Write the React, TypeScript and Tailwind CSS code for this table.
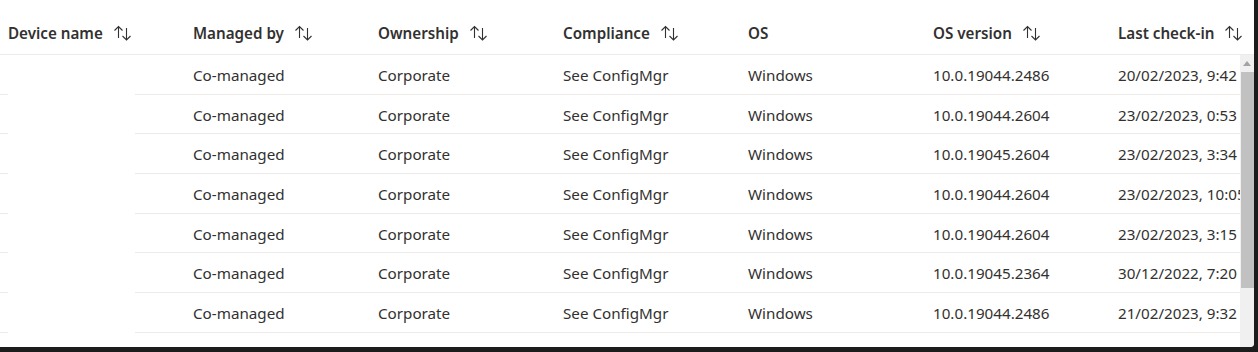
import React from 'react'

const cols = ['Device name', 'Managed by', 'Ownership', 'Compliance', 'OS', 'OS version', 'Last check-in']
const sortable = [true, true, true, true, false, true, true]

const rows = [
  { ver: '10.0.19044.2486', last: '20/02/2023, 9:42 AM' },
  { ver: '10.0.19044.2604', last: '23/02/2023, 0:53 AM' },
  { ver: '10.0.19045.2604', last: '23/02/2023, 3:34 AM' },
  { ver: '10.0.19044.2604', last: '23/02/2023, 10:05 AM' },
  { ver: '10.0.19044.2604', last: '23/02/2023, 3:15 AM' },
  { ver: '10.0.19045.2364', last: '30/12/2022, 7:20 AM' },
  { ver: '10.0.19044.2486', last: '21/02/2023, 9:32 AM' },
]

function SortIcon() {
  return (
    <svg width="20" height="16" viewBox="0 0 20 16" fill="none" stroke="#323130" strokeWidth="1.1" className="ml-2.5 shrink-0">
      <path d="M5.5 13V1.5M1.5 5.5l4-4 4 4" />
      <path d="M13.5 3v12M9.5 11l4 4 4-4" />
    </svg>
  )
}

function Cell({ children }: { children: React.ReactNode }) {
  return (
    <div className="w-[185px] shrink-0 px-2 pt-[2px] flex items-center border-b border-[#edebe9] whitespace-nowrap overflow-hidden">
      {children}
    </div>
  )
}

export default function App() {
  return (
    <div className="w-[1258px] h-[352px] bg-[#1c1c1c] overflow-hidden" style={{ fontFamily: '"Noto Sans", "Open Sans", sans-serif' }}>
      <div className="w-[1254px] h-[347px] bg-white rounded-br-[4px] flex flex-col overflow-hidden text-[15.2px] text-[#323130]">
        <div className="h-[55px] shrink-0 flex border-b border-[#edebe9] pt-3">
          {cols.map((c, i) => (
            <div key={c} className="w-[185px] shrink-0 px-2 flex items-center font-semibold whitespace-nowrap">
              {c}
              {sortable[i] && <SortIcon />}
            </div>
          ))}
        </div>
        <div className="flex flex-1 min-h-0">
          <div className="flex-1 overflow-hidden">
            {rows.map((r, i) => (
              <div key={i} className="h-[39.7px] flex">
                <div className="w-[185px] shrink-0 flex">
                  <div className="w-2 border-b border-[#edebe9]" />
                  <div className="w-[127px] bg-white" />
                  <div className="flex-1 border-b border-[#edebe9]" />
                </div>
                <Cell>Co-managed</Cell>
                <Cell>Corporate</Cell>
                <Cell>See ConfigMgr</Cell>
                <Cell>Windows</Cell>
                <Cell>{r.ver}</Cell>
                <div className="flex-1 min-w-0 pl-2 pt-[2px] flex items-center border-b border-[#edebe9] whitespace-nowrap overflow-hidden">
                  {r.last}
                </div>
              </div>
            ))}
          </div>
          <div className="w-[14px] shrink-0 bg-[#f0f0f0] flex flex-col items-center">
            <div className="h-[17px] flex items-center justify-center">
              <svg width="8" height="5" viewBox="0 0 8 5"><path d="M0 5L4 0l4 5z" fill="#a3a3a3" /></svg>
            </div>
            <div className="w-[13px] h-[216px] bg-[#c1c1c1]" />
          </div>
        </div>
      </div>
    </div>
  )
}
